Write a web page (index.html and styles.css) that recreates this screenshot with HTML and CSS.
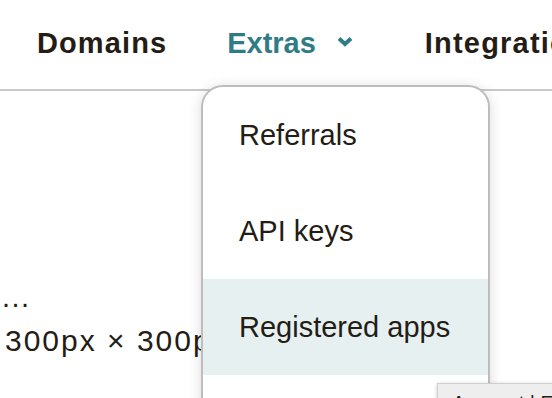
FILE: index.html
```html
<!DOCTYPE html>
<html>
<head>
    <title>Extras menu</title>
    <link rel="stylesheet" href="styles.css">
</head>
<body>
    <header class="nav">
        <a class="nav-item nav-domains" href="#">Domains</a>
        <a class="nav-item nav-extras" href="#">Extras
            <svg class="chevron" width="18" height="11" viewBox="0 0 18 11">
                <path d="M3 2.5 L9 8 L15 2.5" fill="none" stroke="currentColor" stroke-width="4" stroke-linejoin="miter"/>
            </svg>
        </a>
        <a class="nav-item nav-wide" href="#">Integrations</a>
    </header>

    <main class="content">
        <p class="line line-dots">...</p>
        <p class="line line-size">300px × 300px</p>
    </main>

    <div class="dropdown">
        <a class="dropdown-item" href="#">Referrals</a>
        <a class="dropdown-item" href="#">API keys</a>
        <a class="dropdown-item active" href="#">Registered apps</a>
        <a class="dropdown-item" href="#">Account</a>
    </div>

    <div class="tooltip">Account | Extras</div>
</body>
</html>
```

FILE: styles.css
```css
body { margin: 0; width: 552px; height: 398px; overflow: hidden; font-family: "Liberation Sans", Arial, sans-serif; color: #241c15; background: #fff; position: relative; }
a { color: inherit; text-decoration: none; }

.nav { height: 91px; box-sizing: border-box; padding: 25px 0 0 37px; display: flex; align-items: flex-start; white-space: nowrap; border-bottom: 2px solid #c9c9c9; }
.nav-item { font-size: 29px; line-height: 36px; font-weight: bold; display: flex; align-items: center; }
.nav-wide { letter-spacing: 1.2px; }
.nav-domains { letter-spacing: 1.1px; margin-right: 60px; }
.nav-extras { color: #2f7c87; margin-right: 71px; }
.chevron { margin-left: 20px; margin-top: -4px; }

.content { padding: 188px 0 0 2px; white-space: nowrap; }
.line { margin: 0; font-size: 29px; line-height: 36px; }
.line-dots { letter-spacing: 1.5px; }
.line-size { margin-top: 8px; padding-left: 3px; font-size: 30px; letter-spacing: 2px; }

.dropdown { position: absolute; left: 201px; top: 85px; width: 289px; height: 340px; box-sizing: border-box; background: #fff; border: 2px solid #bdbdbd; border-radius: 22px; overflow: hidden; box-shadow: 0 2px 14px rgba(0, 0, 0, 0.14); }
.dropdown-item { height: 96px; display: flex; align-items: center; padding-left: 36px; font-size: 29px; line-height: 36px; }
.dropdown-item.active { background: #e6f0f1; }

.tooltip { position: absolute; left: 437px; top: 383px; background: #eeeeee; border: 1px solid #cfcfcf; padding: 7px 14px; font-size: 20px; line-height: 24px; white-space: nowrap; box-shadow: 0 1px 4px rgba(0, 0, 0, 0.2); }
```
